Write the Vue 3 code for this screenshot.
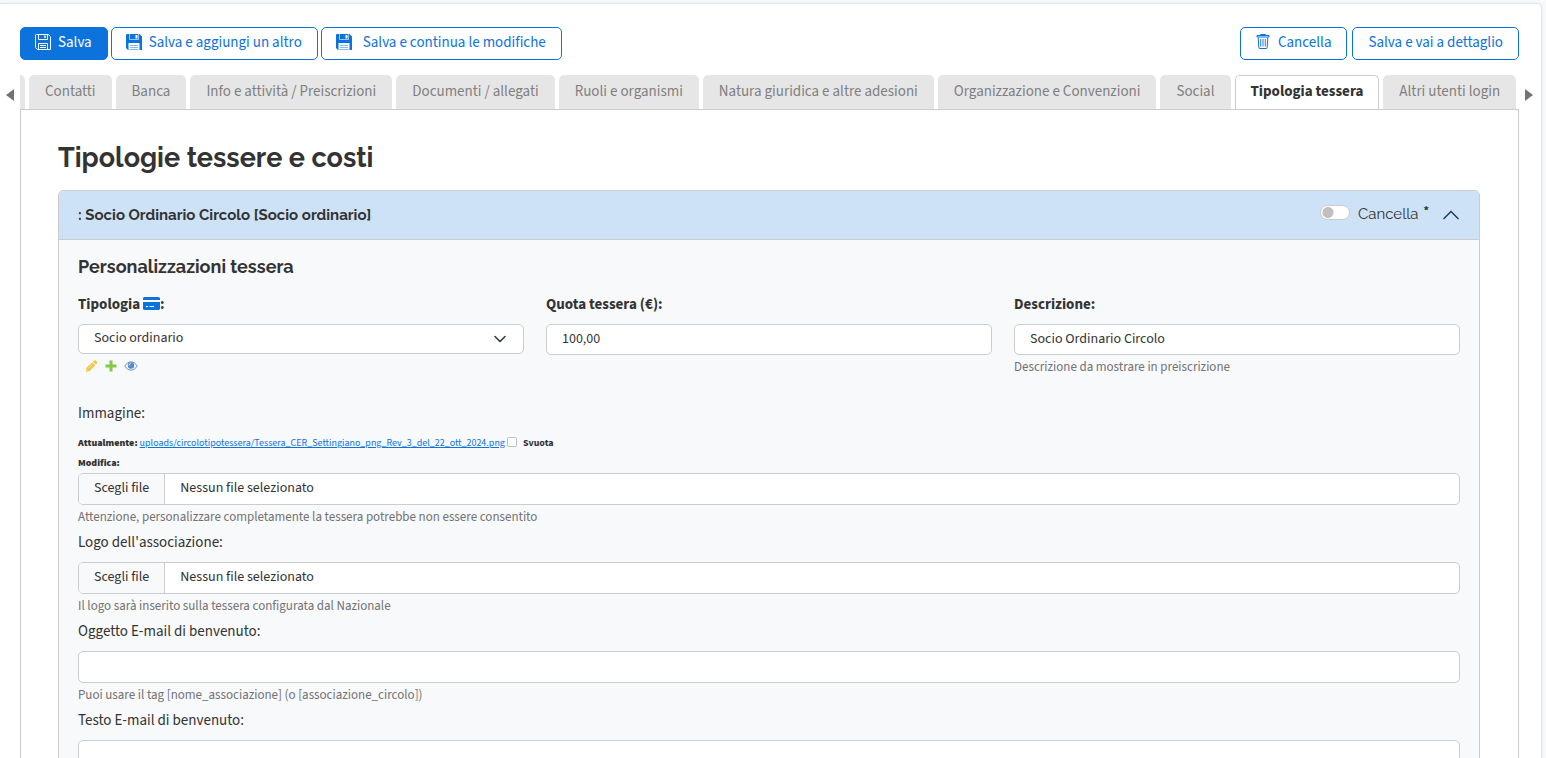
<script setup>
import { ref } from 'vue'

const saveActions = [
  { label: 'Salva', primary: true },
  { label: 'Salva e aggiungi un altro' },
  { label: 'Salva e continua le modifiche', wide: true },
]
const tabs = [
  'Contatti',
  'Banca',
  'Info e attività / Preiscrizioni',
  'Documenti / allegati',
  'Ruoli e organismi',
  'Natura giuridica e altre adesioni',
  'Organizzazione e Convenzioni',
  'Social',
  'Tipologia tessera',
  'Altri utenti login',
]
const activeTab = ref('Tipologia tessera')
const fee = ref('100,00')
const description = ref('Socio Ordinario Circolo')
const remove = ref(false)
const clearImage = ref(false)
const subject = ref('')
const body = ref('')
</script>

<template>
  <main class="page">
    <div class="toolbar">
      <button
        v-for="a in saveActions"
        :key="a.label"
        type="button"
        class="btn"
        :class="{ primary: a.primary, wide: a.wide }"
      >
        <svg v-if="a.primary" class="disk" viewBox="0 0 16 16" fill="none" stroke="currentColor" aria-hidden="true">
          <path d="M1.5.5h11.8l2.2 2.2v12.8h-13l-2-2V1.500a1 1 0 0 1 1-1z" />
          <path d="M3.500.5v5h9v-5M3.500 15.500v-6h9v6M5 11.500h6M5 13.500h6" />
          <path d="M10 1.500v2.500" stroke-width="1.500" />
        </svg>
        <svg v-else class="disk" viewBox="0 0 16 16" aria-hidden="true">
          <path fill="currentColor" d="M1 0h12.500L16 2.500V16h-2.500V9h-11v7H2l-2-2V1a1 1 0 0 1 1-1z" />
          <path fill="#fff" d="M9.500 1h2v3.500h-2z" />
          <path fill="none" stroke="#fff" stroke-opacity=".6" d="M3.500 0v5.500h9V0" />
          <path fill="none" stroke="currentColor" stroke-opacity=".5" d="M4 11.500h8M4 13.500h8M3.500 15.500h9" />
        </svg>
        <span>{{ a.label }}</span>
      </button>
      <div class="right">
        <button type="button" class="btn">
          <svg class="disk" viewBox="0 0 16 16" fill="none" stroke="currentColor" aria-hidden="true">
            <path d="M2 1.500h12v1.500H2zM5.500 1.500v-1h5v1M3.200 3.500l.6 10a1 1 0 0 0 1 1h6.400a1 1 0 0 0 1-1l.6-10" />
            <path d="M5.700 5v7.500M8 5v7.500M10.300 5v7.500" stroke-width=".9" />
          </svg>
          <span>Cancella</span>
        </button>
        <button type="button" class="btn"><span>Salva e vai a dettaglio</span></button>
      </div>
    </div>

    <div class="tabs-row">
      <button type="button" class="scroll prev" aria-label="Schede precedenti">
        <svg viewBox="0 0 8 12" aria-hidden="true"><path d="M8 0v12L0 6z" /></svg>
      </button>
      <nav class="tabs" role="tablist">
        <span class="tab-edge"></span>
        <button
          v-for="t in tabs"
          :key="t"
          type="button"
          role="tab"
          class="tab"
          :class="{ active: t === activeTab }"
          :aria-selected="t === activeTab"
          @click="activeTab = t"
        >{{ t }}</button>
      </nav>
      <button type="button" class="scroll next" aria-label="Schede successive">
        <svg viewBox="0 0 8 12" aria-hidden="true"><path d="M0 0v12l8-6z" /></svg>
      </button>
    </div>

    <section class="panel">
      <h1>Tipologie tessere e costi</h1>
      <div class="accordion">
        <header class="acc-head">
          <h2>: Socio Ordinario Circolo [Socio ordinario]</h2>
          <label class="switch">
            <input v-model="remove" type="checkbox" />
            <span>Cancella</span>
            <sup>*</sup>
          </label>
          <button type="button" class="collapse" aria-label="Comprimi">
            <svg viewBox="0 0 16 10" fill="none" stroke="#12365f" stroke-width="1.300" aria-hidden="true">
              <path d="M.5 9 8 1.500 15.500 9" />
            </svg>
          </button>
        </header>

        <div class="acc-body">
          <h3>Personalizzazioni tessera</h3>
          <div class="cols">
            <div>
              <label class="strong" for="kind">
                Tipologia
                <svg class="cardicon" viewBox="0 0 17 13" aria-hidden="true">
                  <path fill="#0d73dc" d="M1.500 0h14A1.500 1.500 0 0 1 17 1.500V3H0V1.500A1.500 1.500 0 0 1 1.500 0zM0 5h17v6.500a1.500 1.500 0 0 1-1.500 1.500h-14A1.500 1.500 0 0 1 0 11.500z" />
                  <path stroke="#fff" d="M3 9.500h2M6.500 9.500h4.500" />
                </svg>:
              </label>
              <div class="select">
                <select id="kind">
                  <option>Socio ordinario</option>
                </select>
                <svg viewBox="0 0 12 8" fill="none" stroke="#343a40" stroke-width="1.600" stroke-linecap="round" stroke-linejoin="round" aria-hidden="true">
                  <path d="m1 1.500 5 5 5-5" />
                </svg>
              </div>
              <div class="links">
                <a href="#modifica" aria-label="Modifica tipologia">
                  <svg viewBox="0 0 14 14" aria-hidden="true">
                    <path fill="#efb80b" fill-opacity=".8" d="m2.500 9 5.800-5.800 3 3L5.500 12l-3.700 1zM9 2.500l1-1q.8-.7 1.600 0l1.400 1.400q.7.800 0 1.600l-1 1z" />
                    <path stroke="#fff" stroke-opacity=".7" stroke-width=".8" d="m4.200 9.500 4.800-4.800M2.300 11l1.300 1.300" />
                  </svg>
                </a>
                <a href="#aggiungi" aria-label="Aggiungi tipologia">
                  <svg viewBox="0 0 14 14" aria-hidden="true"><path fill="#70bf2b" fill-opacity=".85" d="M5.500 1.500h3v4h4v3h-4v4h-3v-4h-4v-3h4z" /></svg>
                </a>
                <a href="#vedi" aria-label="Visualizza tipologia">
                  <svg viewBox="0 0 14 14" aria-hidden="true">
                    <path fill="none" stroke="#447bc5" stroke-opacity=".8" d="M.8 7C4 1.500 10 1.500 13.200 7 10 12.500 4 12.500.8 7z" />
                    <circle cx="7" cy="6.500" r="3.200" fill="#447bc5" fill-opacity=".9" />
                    <path fill="none" stroke="#fff" stroke-width=".8" d="M5 6.500Q5 4.700 7 4.500" />
                  </svg>
                </a>
              </div>
            </div>
            <div>
              <label class="strong" for="fee">Quota tessera (€):</label>
              <input id="fee" v-model="fee" class="field short" type="text" />
            </div>
            <div>
              <label class="strong" for="description">Descrizione:</label>
              <input id="description" v-model="description" class="field short" type="text" />
              <p class="help">Descrizione da mostrare in preiscrizione</p>
            </div>
          </div>

          <label class="plain first" for="image">Immagine:</label>
          <div class="current">
            <b>Attualmente:</b>
            <a href="#file">uploads/circolotipotessera/Tessera_CER_Settingiano_png_Rev_3_del_22_ott_2024.png</a>
            <input id="clear" v-model="clearImage" type="checkbox" />
            <label for="clear">Svuota</label>
          </div>
          <div class="current"><b>Modifica:</b></div>
          <label class="file">
            <input id="image" class="hidden" type="file" />
            <span class="pick">Scegli file</span>
            <span class="name">Nessun file selezionato</span>
          </label>
          <p class="help">Attenzione, personalizzare completamente la tessera potrebbe non essere consentito</p>

          <label class="plain" for="logo">Logo dell'associazione:</label>
          <label class="file">
            <input id="logo" class="hidden" type="file" />
            <span class="pick">Scegli file</span>
            <span class="name">Nessun file selezionato</span>
          </label>
          <p class="help">Il logo sarà inserito sulla tessera configurata dal Nazionale</p>

          <label class="plain" for="subject">Oggetto E-mail di benvenuto:</label>
          <input id="subject" v-model="subject" class="field" type="text" />
          <p class="help">Puoi usare il tag [nome_associazione] (o [associazione_circolo])</p>

          <label class="plain" for="body">Testo E-mail di benvenuto:</label>
          <textarea id="body" v-model="body" class="field area"></textarea>
        </div>
      </div>
    </section>
  </main>
</template>

<style>
html {
  height: 100%;
  overflow: hidden;
}
body {
  margin: 0;
  height: 100%;
  overflow: hidden;
  background: #f8f9fb;
}
</style>

<style scoped>
* {
  box-sizing: border-box;
}
.page {
  margin: 3px 4px 0 0;
  padding: 23px 0 0;
  background: #fff;
  border: 1px solid #e4e7ea;
  border-left: 0;
  border-radius: 0 5px 0 0;
  box-shadow: 0 0 3px rgba(0, 0, 0, 0.08);
  color: #333;
  font-family: "Source Sans Pro", "Source Sans 3", "Noto Sans CJK JP", "Noto Sans", sans-serif;
  font-size: 15px;
  line-height: 20px;
}
button,
input,
select,
textarea {
  font: inherit;
  color: inherit;
}
h1,
h2,
h3,
p {
  margin: 0;
}
h1,
h2,
h3,
.switch {
  font-family: Raleway, Lato, sans-serif;
}
.toolbar {
  display: flex;
  gap: 3px;
  padding: 0 22px 0 20px;
}
.right {
  display: flex;
  gap: 5px;
  margin-left: auto;
}
.btn {
  display: flex;
  align-items: center;
  gap: 7px;
  height: 33px;
  padding: 0 15px 4px;
  border: 1px solid #0d73dc;
  border-radius: 5px;
  background: #fff;
  color: #0d73dc;
  white-space: nowrap;
}
.btn span {
  padding-top: 2px;
}
.btn.primary {
  background: #0d73dc;
  color: #fff;
}
.btn.wide {
  gap: 11px;
}
.disk {
  width: 16px;
  height: 16px;
  margin-left: -1px;
}
.tabs-row {
  display: flex;
  margin-top: 15px;
}
.scroll {
  display: flex;
  align-items: center;
  border: 0;
  padding: 4px 0 0;
  background: none;
}
.scroll svg {
  width: 8px;
  height: 12px;
  fill: #6c757d;
}
.prev {
  width: 20px;
  padding-left: 6px;
}
.next {
  width: 22px;
  padding-left: 6px;
}
.tabs {
  display: flex;
  flex: 1;
  min-width: 0;
  gap: 4px;
  overflow: hidden;
  border-bottom: 1px solid #ccc;
}
.tab-edge {
  flex: none;
  width: 5px;
  border-radius: 0 5px 0 0;
  background: #e6e6e6;
}
.tab {
  height: 34px;
  padding: 0 16px;
  border: 0;
  border-radius: 5px 5px 0 0;
  background: #e6e6e6;
  color: #808080;
  white-space: nowrap;
}
.tab.active {
  border: 1px solid #ccc;
  border-bottom: 0;
  padding: 0 15px 1px;
  background: #fff;
  color: #333;
  font-weight: 700;
}
.panel {
  margin: 0 22px 0 20px;
  padding: 30px 38px 0 37px;
  border: 1px solid #ccc;
  border-top: 0;
}
h1 {
  font-size: 27px;
  line-height: 36px;
}
.accordion {
  margin-top: 14px;
  border: 1px solid #ccc;
  border-radius: 5px 5px 0 0;
  background: #f8f9fb;
  overflow: hidden;
}
.acc-head {
  display: flex;
  align-items: center;
  height: 49px;
  padding: 0 20px 0 19px;
  border-bottom: 1px solid #ccc;
  background: #cee2f7;
}
h2 {
  flex: 1;
  font-size: 15px;
}
.switch {
  display: flex;
  align-items: center;
  padding-bottom: 3px;
  font-size: 15px;
}
.switch input {
  appearance: none;
  width: 30px;
  height: 15px;
  margin: 0 8px 2px 0;
  border: 1px solid #ccc;
  border-radius: 8px;
  background: radial-gradient(circle at 7px 50%, #bfbfbf 5px, #fff 6px);
}
.switch input:checked {
  background: radial-gradient(circle at 21px 50%, #fff 5px, #0d73dc 6px);
}
.switch sup {
  margin-left: 5px;
  padding-bottom: 6px;
  font-family: "Source Sans Pro", "Source Sans 3", sans-serif;
  font-size: 12px;
  font-weight: 700;
}
.collapse {
  display: flex;
  margin-left: 14px;
  padding: 0;
  border: 0;
  background: none;
}
.collapse svg {
  width: 16px;
  height: 10px;
}
.acc-body {
  padding: 15px 19px 20px;
}
h3 {
  font-size: 18px;
  line-height: 24px;
}
.cols {
  display: grid;
  grid-template-columns: repeat(3, 1fr);
  gap: 22px;
  margin-top: 16px;
}
.strong {
  display: block;
  margin-bottom: 9px;
  font-weight: 700;
}
.cardicon {
  width: 17px;
  height: 13px;
  vertical-align: -1px;
}
.field {
  display: block;
  width: 100%;
  height: 32px;
  padding: 0 15px 2px;
  border: 1px solid #ccc;
  border-radius: 5px;
  background: #fff;
  font-size: 14px;
}
.field.short {
  height: 31px;
}
.field.area {
  height: 120px;
}
.select {
  position: relative;
}
.select select {
  appearance: none;
  display: block;
  width: 100%;
  height: 30px;
  padding: 0 15px 2px;
  border: 1px solid #ccc;
  border-radius: 5px;
  background: #fff;
  font-size: 14px;
}
.select svg {
  position: absolute;
  right: 18px;
  top: 11px;
  width: 12px;
  height: 8px;
  pointer-events: none;
}
.links {
  display: flex;
  gap: 6px;
  padding: 5px 6px 0;
}
.links svg {
  display: block;
  width: 14px;
  height: 14px;
}
.help {
  margin-bottom: 6px;
  padding-top: 2px;
  color: #737373;
  font-size: 13px;
}
.plain {
  display: block;
  margin-bottom: 9px;
}
.plain.first {
  margin-top: 21px;
}
.current {
  display: flex;
  align-items: center;
  font-size: 10px;
  font-weight: 700;
}
.current a {
  margin: 0 2px;
  color: #0d73dc;
  font-weight: 400;
}
.current input {
  appearance: none;
  width: 10px;
  height: 10px;
  margin: 0 6px 2px 0;
  border: 1px solid #bfbfbf;
  border-radius: 2px;
  background: #fff;
}
.current input:checked {
  background: #0d73dc;
}
.file {
  display: flex;
  height: 32px;
  border: 1px solid #ccc;
  border-radius: 5px;
  background: #fff;
  font-size: 14px;
  line-height: 28px;
  overflow: hidden;
}
.hidden {
  position: absolute;
  width: 1px;
  height: 1px;
  opacity: 0;
}
.pick {
  padding: 0 15px;
  border-right: 1px solid #ccc;
  background: #f8f9fb;
}
.name {
  padding: 0 15px;
}
</style>
